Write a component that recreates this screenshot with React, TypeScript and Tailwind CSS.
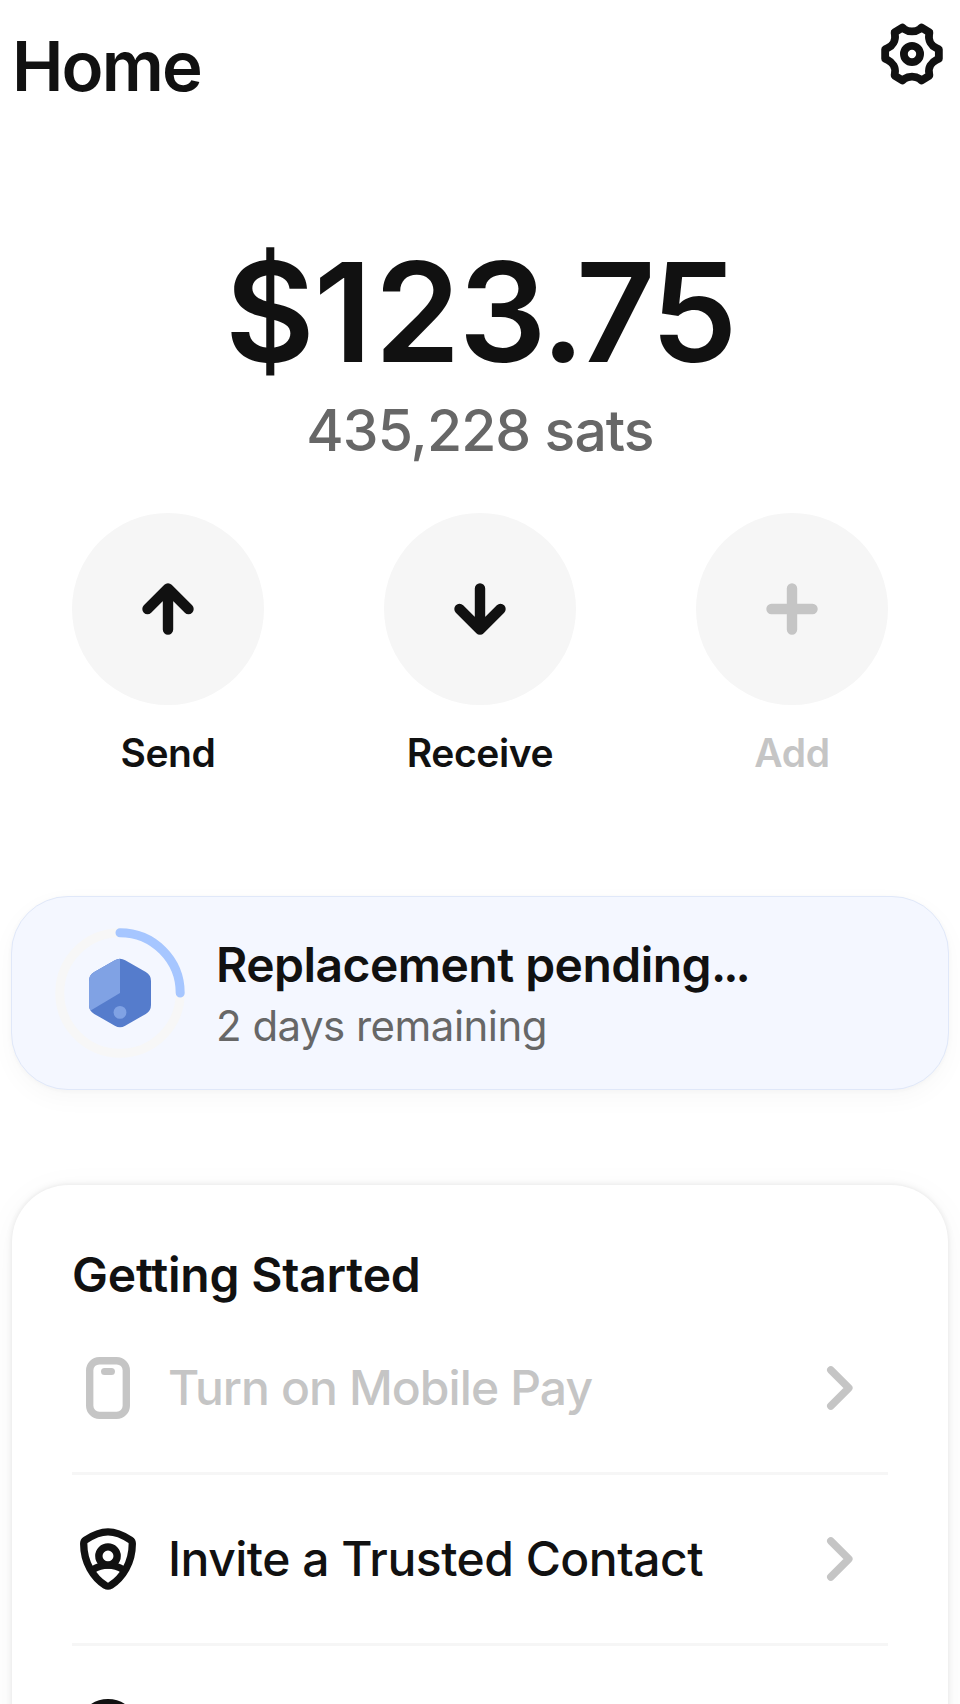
import type { ReactNode } from "react";

const ICON_BOX = "-12 -12 24 24";

function GearIcon() {
  return (
    <svg viewBox={ICON_BOX} className="size-[72px]" fill="none" stroke="currentColor" strokeWidth="2.6" strokeLinejoin="round">
      <path d="M8.95 -1.6V1.6L8.1 2C6.4 2.8 5.4 4.6 5.7 6.4L5.8 7.2L3.2 8.8L2.6 8.3C1.1 7.25 -1.1 7.25 -2.6 8.3L-3.2 8.8L-5.8 7.2L-5.7 6.4C-5.4 4.6 -6.4 2.8 -8.1 2L-8.95 1.6V-1.6L-8.1 -2C-6.4 -2.8 -5.4 -4.6 -5.7 -6.4L-5.8 -7.2L-3.2 -8.8L-2.6 -8.3C-1.1 -7.25 1.1 -7.25 2.6 -8.3L3.2 -8.8L5.8 -7.2L5.7 -6.4C5.4 -4.6 6.4 -2.8 8.1 -2Z" />
      <circle r="2.7" />
    </svg>
  );
}

function ActionIcon({ d }: { d: string }) {
  return (
    <svg viewBox="-36 -36 72 72" className="size-[72px]" fill="none" stroke="currentColor" strokeWidth="10.4" strokeLinecap="round" strokeLinejoin="round">
      <path d={d} />
    </svg>
  );
}

function PhoneIcon() {
  return (
    <svg viewBox={ICON_BOX} className="size-[72px]" fill="none" stroke="currentColor" strokeWidth="2.45" strokeLinecap="round">
      <rect x="-6.1" y="-9.1" width="12.2" height="18.2" rx="3.2" />
      <path d="M-1.15 -5.5H1.15" strokeWidth="2.35" />
    </svg>
  );
}

function ShieldIcon() {
  return (
    <svg viewBox={ICON_BOX} className="size-[72px]" fill="none" stroke="currentColor" strokeWidth="2.45" strokeLinejoin="round">
      <path d="M0 -9.05C2.6 -9.05 5.6 -7.6 7.5 -6.35Q8.1 -5.95 8.1 -5.1C8.1 1.2 4.9 6.2 0.9 8.8Q0 9.3 -0.9 8.8C-4.9 6.2 -8.1 1.2 -8.1 -5.1Q-8.1 -5.95 -7.5 -6.35C-5.6 -7.6 -2.6 -9.05 0 -9.05Z" />
      <circle cy="-1" r="3.05" />
      <path d="M-5.2 3.6Q0 0.5 5.2 3.6" />
    </svg>
  );
}

function CircleIcon() {
  return (
    <svg viewBox={ICON_BOX} className="size-[72px]" fill="none" stroke="currentColor" strokeWidth="2.45">
      <circle r="9.1" />
    </svg>
  );
}

function Chevron() {
  return (
    <svg viewBox="-36 -36 72 72" className="mr-3 size-[72px] shrink-0 text-[#c5c5c5]" fill="none" stroke="currentColor" strokeWidth="7.5" strokeLinecap="round" strokeLinejoin="round">
      <path d="M-9.2 -18L8.8 0L-9.2 18" />
    </svg>
  );
}

function ProgressRing() {
  return (
    <svg viewBox="-66 -66 132 132" className="size-[132px] shrink-0">
      <circle r="60.2" fill="none" stroke="#f7f7f7" strokeWidth="9" />
      <path d="M0 -60.2A60.2 60.2 0 0 1 60.2 0" fill="none" stroke="#a6c6ff" strokeWidth="9" strokeLinecap="round" />
      <clipPath id="hexagon">
        <path d="M-5.2 -32.8Q0 -35.8 5.2 -32.8L25.8 -20.9Q31 -17.9 31 -11.9V11.9Q31 17.9 25.8 20.9L5.2 32.8Q0 35.8 -5.2 32.8L-25.8 20.9Q-31 17.9 -31 11.9V-11.9Q-31 -17.9 -25.8 -20.9Z" />
      </clipPath>
      <g clipPath="url(#hexagon)">
        <rect x="-36" y="-36" width="72" height="72" fill="#557ccc" />
        <path d="M0 0V-36H-36V21.6Z" fill="#80a2e4" />
      </g>
      <circle cy="19.4" r="6.4" fill="#80a2e4" />
    </svg>
  );
}

function Action({ label, d, disabled }: { label: string; d: string; disabled?: boolean }) {
  return (
    <button className={disabled ? "flex w-48 flex-col items-center text-[#c5c5c5]" : "flex w-48 flex-col items-center"}>
      <span className="flex size-48 items-center justify-center rounded-full bg-[#f6f6f6]">
        <ActionIcon d={d} />
      </span>
      <span className="mt-[18px] text-[39px] leading-[60px] font-semibold tracking-[-0.01em]">{label}</span>
    </button>
  );
}

function TaskRow({ icon, children, disabled }: { icon: ReactNode; children: ReactNode; disabled?: boolean }) {
  return (
    <li className={disabled ? "flex h-[171px] items-center text-[#c5c5c5]" : "flex h-[171px] items-center"}>
      {icon}
      <span className="ml-6 grow text-[48px] leading-[72px] font-medium">{children}</span>
      <Chevron />
    </li>
  );
}

export default function App() {
  return (
    <main className="flex h-[1704px] w-[960px] flex-col overflow-hidden bg-white px-3 font-['Inter',sans-serif] text-[#111111]">
      <header className="flex h-[132px] shrink-0 items-center justify-between">
        <h1 className="text-[69px] leading-[84px] font-semibold tracking-[-0.027em]">Home</h1>
        <button aria-label="Settings" className="mb-6">
          <GearIcon />
        </button>
      </header>

      <section className="mt-[96px] flex shrink-0 flex-col items-center">
        <p className="mr-px text-[138px] leading-[168px] font-semibold">
          <span className="tracking-[-0.006em]">$</span>
          <span className="tracking-[0.017em]">1</span>
          <span className="tracking-[-0.012em]">2</span>
          <span className="tracking-[-0.042em]">3</span>
          <span className="tracking-[-0.064em]">.</span>
          <span className="tracking-[-0.025em]">75</span>
        </p>
        <p className="mt-px text-[57px] leading-[68px] font-medium tracking-[-0.016em] text-[#676767]">435,228 sats</p>
      </section>

      <section className="mt-[48px] flex shrink-0 justify-between px-[60px]">
        <Action label="Send" d="M0 20.5V-20.5M-20.5 0L0 -20.5L20.5 0" />
        <Action label="Receive" d="M0 -20.5V20.5M-20.5 0L0 20.5L20.5 0" />
        <Action label="Add" d="M0 -20.5V20.5M-20.5 0H20.5" disabled />
      </section>

      <section className="-mx-px mt-[113px] flex h-[194px] shrink-0 items-center gap-[30px] rounded-[57px] border border-[#e0e8f9] bg-[#f4f7ff] pl-[42px] shadow-[0_1px_5px_rgba(0,0,0,0.03),0_8px_26px_rgba(0,0,0,0.03)]">
        <ProgressRing />
        <div className="pt-[5px]">
          <h2 className="text-[48px] leading-[60px] font-semibold tracking-[-0.011em]">
            Replacement pending<span className="tracking-[-0.065em]">...</span>
          </h2>
          <p className="text-[42px] leading-[62px] tracking-[-0.0125em] text-[#676767]">2 days remaining</p>
        </div>
      </section>

      <section className="mt-[95px] h-[700px] shrink-0 rounded-[57px] bg-white px-[60px] pt-[60px] shadow-[0_0_6px_rgba(0,0,0,0.1),0_6px_36px_rgba(0,0,0,0.04)]">
        <h2 className="text-[48px] leading-[60px] font-semibold tracking-[-0.004em]">Getting Started</h2>
        <ul className="-mt-px divide-y-[3px] divide-[#f6f6f6]">
          <TaskRow icon={<PhoneIcon />} disabled>
            <span className="tracking-[-0.019em]">Turn on Mobile Pay</span>
          </TaskRow>
          <TaskRow icon={<ShieldIcon />}>
            <span className="tracking-[-0.0105em]">Invite a Trusted Contact</span>
          </TaskRow>
          <li className="flex h-[168px] items-center">
            <CircleIcon />
          </li>
        </ul>
      </section>
    </main>
  );
}
